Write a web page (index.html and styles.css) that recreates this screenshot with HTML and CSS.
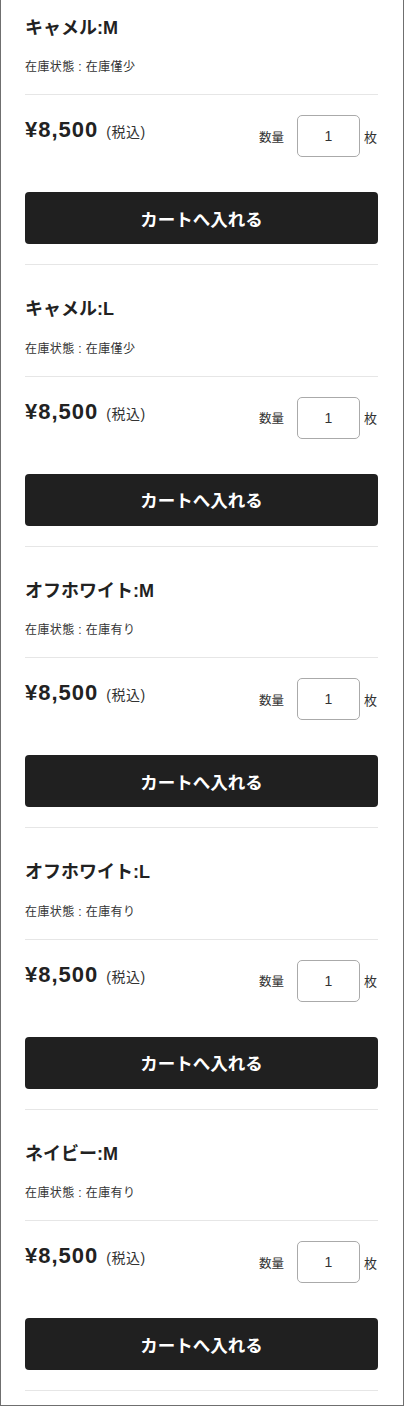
FILE: index.html
```html
<!DOCTYPE html>
<html lang="ja">
	<head>
		<meta charset="utf-8">
		<title>カート</title>
		<link rel="stylesheet" href="styles.css">
	</head>
	<body>
		<div class="page">
			<div class="item">
				<div class="item-head">
					<h2 class="item-name">キャメル:M</h2>
					<p class="stock">在庫状態 : 在庫僅少</p>
				</div>
				<div class="item-body">
					<div class="buy-row">
						<p class="price">¥8,500<span class="tax">(税込)</span></p>
						<label class="qty">数量<input type="text" class="qty-input" value="1"><span class="unit">枚</span></label>
					</div>
					<button class="cart-btn">カートへ入れる</button>
				</div>
			</div>
			<div class="item">
				<div class="item-head">
					<h2 class="item-name">キャメル:L</h2>
					<p class="stock">在庫状態 : 在庫僅少</p>
				</div>
				<div class="item-body">
					<div class="buy-row">
						<p class="price">¥8,500<span class="tax">(税込)</span></p>
						<label class="qty">数量<input type="text" class="qty-input" value="1"><span class="unit">枚</span></label>
					</div>
					<button class="cart-btn">カートへ入れる</button>
				</div>
			</div>
			<div class="item">
				<div class="item-head">
					<h2 class="item-name">オフホワイト:M</h2>
					<p class="stock">在庫状態 : 在庫有り</p>
				</div>
				<div class="item-body">
					<div class="buy-row">
						<p class="price">¥8,500<span class="tax">(税込)</span></p>
						<label class="qty">数量<input type="text" class="qty-input" value="1"><span class="unit">枚</span></label>
					</div>
					<button class="cart-btn">カートへ入れる</button>
				</div>
			</div>
			<div class="item">
				<div class="item-head">
					<h2 class="item-name">オフホワイト:L</h2>
					<p class="stock">在庫状態 : 在庫有り</p>
				</div>
				<div class="item-body">
					<div class="buy-row">
						<p class="price">¥8,500<span class="tax">(税込)</span></p>
						<label class="qty">数量<input type="text" class="qty-input" value="1"><span class="unit">枚</span></label>
					</div>
					<button class="cart-btn">カートへ入れる</button>
				</div>
			</div>
			<div class="item">
				<div class="item-head">
					<h2 class="item-name">ネイビー:M</h2>
					<p class="stock">在庫状態 : 在庫有り</p>
				</div>
				<div class="item-body">
					<div class="buy-row">
						<p class="price">¥8,500<span class="tax">(税込)</span></p>
						<label class="qty">数量<input type="text" class="qty-input" value="1"><span class="unit">枚</span></label>
					</div>
					<button class="cart-btn">カートへ入れる</button>
				</div>
			</div>
		</div>
	</body>
</html>
```
FILE: styles.css
```css
html, body {
	margin: 0;
	padding: 0;
}
body {
	font-family: "Liberation Sans", "Noto Sans CJK JP", sans-serif;
	color: #222;
	background: #fff;
}
.page {
	box-sizing: border-box;
	min-height: 100vh;
	padding: 0 25px 0 24px;
	border: 1px solid #6f6f6f;
	border-top: none;
}
.item {
	border-bottom: 1px solid #e6e6e6;
}
.item-head {
	padding: 31px 0 18px;
	border-bottom: 1px solid #e6e6e6;
}
.item:first-child .item-head {
	padding-top: 14.5px;
}
.item-name {
	margin: 0;
	font-size: 18px;
	line-height: 27px;
	font-weight: bold;
}
.stock {
	margin: 16.5px 0 0;
	font-size: 12px;
	line-height: 18px;
	letter-spacing: 0.4px;
	color: #333;
}
.item-body {
	padding: 20px 0;
}
.buy-row {
	display: flex;
	justify-content: space-between;
	align-items: flex-start;
}
.price {
	margin: 0;
	font-size: 22px;
	line-height: 29px;
	font-weight: bold;
	letter-spacing: 1px;
}
.tax {
	margin-left: 8px;
	font-size: 14px;
	font-weight: normal;
	letter-spacing: 0.5px;
	color: #333;
}
.qty {
	display: flex;
	align-items: center;
	font-size: 12.5px;
	color: #333;
}
.qty-input {
	box-sizing: border-box;
	width: 63px;
	height: 42px;
	margin-left: 13px;
	padding: 0;
	border: 1px solid #aaa;
	border-radius: 5px;
	text-align: center;
	font-family: "Liberation Sans", sans-serif;
	font-size: 14px;
	color: #333;
}
.unit {
	margin-left: 4px;
	padding-right: 1px;
	font-size: 13px;
}
.cart-btn {
	display: block;
	width: 100%;
	height: 52px;
	margin-top: 35px;
	padding: 0;
	border: none;
	border-radius: 4px;
	background-color: #202020;
	color: #fff;
	font-family: "Liberation Sans", "Noto Sans CJK JP", sans-serif;
	font-size: 17.5px;
	font-weight: bold;
	cursor: pointer;
}
```
